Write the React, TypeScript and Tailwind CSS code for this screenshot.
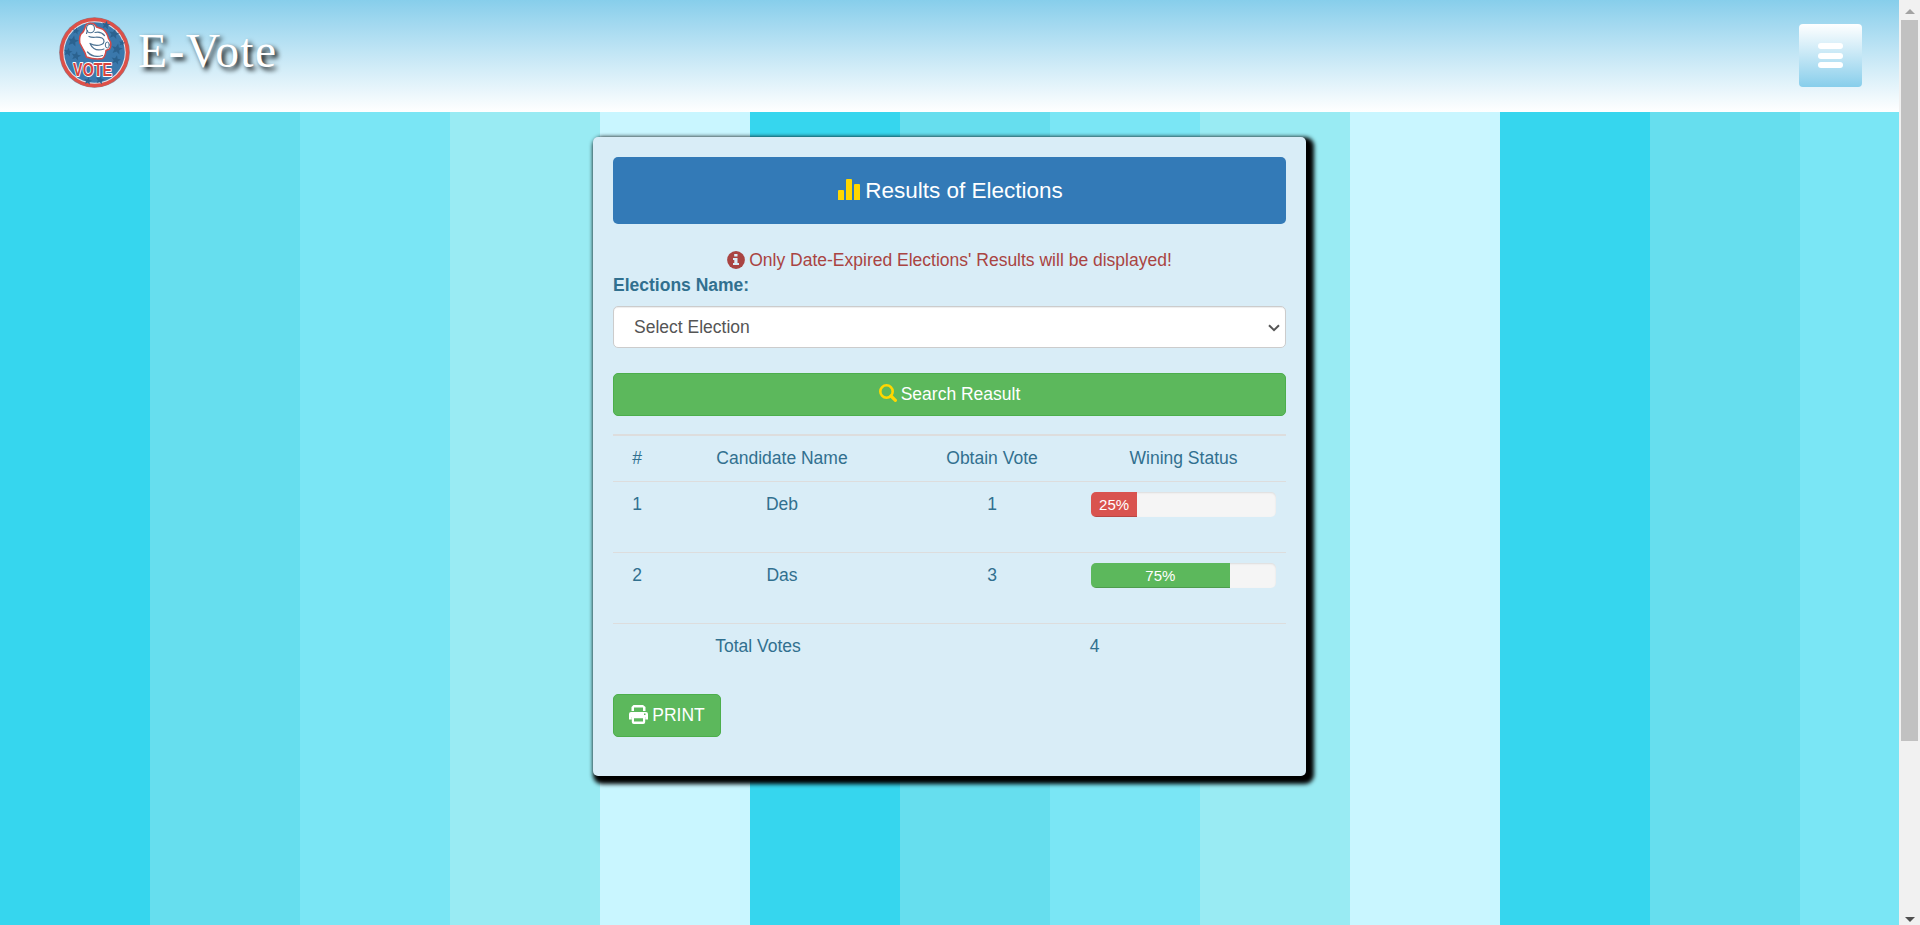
import React from "react";

const STAR = "M0-4 1.1-1.3 4-1.2 1.8.6 2.5 3.4 0 1.8-2.5 3.4-1.8.6-4-1.2-1.1-1.3z";

const stars: [number, number, number][] = [
  [14, 24, 1.4], [9, 35, 1.1], [17, 39, 1.2], [47, 8, 1.1], [55, 17, 1.3], [58, 32, 1.4],
  [17, 14, 0.9], [57, 43, 1.2], [63, 26, 0.8], [29, 64, 1.0], [41, 63, 1.1],
];

function VoteLogo() {
  return (
    <svg className="h-[71px] w-[71px] shrink-0" viewBox="0 0 71 71">
      <circle cx="35.5" cy="35.5" r="35.3" fill="#8a7d8c" />
      <circle cx="35.5" cy="35.5" r="34.8" fill="#dd5048" />
      <circle cx="35.5" cy="35.5" r="31.3" fill="#dfe6ee" />
      <circle cx="35.5" cy="35.5" r="30.3" fill="#3a78ac" />
      {stars.map(([x, y, s]) => (
        <path key={`${x}-${y}`} d={STAR} fill="#2b628f" transform={`translate(${x} ${y}) scale(${s}) rotate(12)`} />
      ))}
      <path
        d="M26.5 9Q28 6 32 6.300 36 6.500 37.500 10L43.500 12Q48 15 49.500 21.500L51.500 25Q52.500 29 50.500 32L47 33.500Q46.500 39 43.500 41.500 36 43 27.500 40 26 35 24.500 33L20.800 26Q20 20 22 17 25 15 26.500 9z"
        fill="#fff"
        stroke="#d34a48"
        strokeWidth="1.500"
        strokeLinejoin="round"
      />
      <g fill="none" stroke="#4d7393" strokeLinecap="round">
        <ellipse cx="31.500" cy="11.500" rx="4" ry="4.300" strokeWidth="1.100" />
        <path
          d="M28.500 13.500l-1 3M36 15.500c4-1 7 0 9.500 3M30 19.500c4 2 8-.5 13 1.500 3 1.500 2.500 5.500-.5 6.500-4 1.500-8 1-11.500-1M31.500 27.500c3 6 9 6 13.500 4.500M28.500 35c4 4.500 10 5 15 3.500"
          strokeWidth="1.200"
        />
        <ellipse cx="48.300" cy="28" rx="2" ry="3" strokeWidth="1" />
      </g>
      <text
        x="33.600"
        y="58.600"
        textAnchor="middle"
        textLength="39"
        lengthAdjust="spacingAndGlyphs"
        fontFamily="Liberation Sans, sans-serif"
        fontWeight="bold"
        fontSize="18"
        fill="#d8443f"
        stroke="#fff"
        strokeWidth="1.800"
        strokeLinejoin="round"
        paintOrder="stroke"
      >
        VOTE
      </text>
    </svg>
  );
}

function StatsIcon() {
  return (
    <svg className="h-[22px] w-[22px] -translate-y-px" viewBox="0 0 22 22" fill="#ffd700">
      <path d="M0 12q0-1 1-1h4q1 0 1 1v9H0zM8 1q0-1 1-1h4q1 0 1 1v20H8zM16 6q0-1 1-1h4q1 0 1 1v15h-6z" />
    </svg>
  );
}

function InfoIcon() {
  return (
    <svg className="h-[18px] w-[18px] -translate-y-px" viewBox="0 0 18 18">
      <circle cx="9" cy="9" r="8.900" fill="#a94442" />
      <path d="M7.200 3h3.300v2.500H7.200zM6 7h4.500v5H12v2H6v-2h1.300V9H6z" fill="#d9edf7" />
    </svg>
  );
}

function SearchIcon() {
  return (
    <svg className="h-[18px] w-[18px] -translate-y-[2px]" viewBox="0 0 18 18" fill="none" stroke="#ffd700">
      <circle cx="7.500" cy="7.500" r="6.200" strokeWidth="2.600" />
      <path d="M12 12l4.400 4.400" strokeWidth="3.200" strokeLinecap="round" />
    </svg>
  );
}

function PrintIcon() {
  return (
    <svg className="h-[19px] w-[19px] -translate-y-px" viewBox="0 0 19 19" fill="#fff" fillRule="evenodd">
      <path d="M2.500 6V2L4.500 0h9.500l2.500 2v4h-2.500V2.500h-9V6zM2 7h15q2 0 2 2v5.500h-3V12H3v2.500H0V9q0-2 2-2zM15 8.500v1.500h1.500V8.500zM2.800 12h13.400v5q0 2-2 2H4.800q-2 0-2-2zM5 13.200v3.200h9v-3.200z" />
    </svg>
  );
}

function Progress({ value, tone }: { value: number; tone: string }) {
  return (
    <div className="mb-[25px] h-[25px] w-full overflow-hidden rounded-[5px] bg-[#f5f5f5] shadow-[inset_0_1px_2px_rgba(0,0,0,0.1)]">
      <div
        className={`${tone} h-full text-center text-[15px] leading-[25px] text-white shadow-[inset_0_-1px_0_rgba(0,0,0,0.15)]`}
        style={{ width: `${value}%` }}
      >
        {value}%
      </div>
    </div>
  );
}

const rows = [
  { id: 1, name: "Deb", votes: 1, share: 25, tone: "bg-[#d9534f]" },
  { id: 2, name: "Das", votes: 3, share: 75, tone: "bg-[#5cb85c]" },
];

function Header() {
  return (
    <header className="flex h-[112px] items-start justify-between bg-linear-to-b from-[#87ceeb] to-white pl-[59px] pr-[37px]">
      <div className="flex pt-[17px]">
        <VoteLogo />
        <span className="ml-[8px] mt-[6px] font-['Liberation_Serif',serif] text-[47.5px] leading-[56px] tracking-[1.4px] text-white [text-shadow:3px_3px_5px_#000]">
          E-Vote
        </span>
      </div>
      <button
        aria-label="Menu"
        className="mt-[24px] flex h-[63px] w-[63px] flex-col items-center justify-center gap-[3.500px] rounded-[4px] bg-linear-to-b from-white to-[#87ceeb]"
      >
        <span className="h-[6px] w-[25px] rounded-[3px] bg-white" />
        <span className="h-[6px] w-[25px] rounded-[3px] bg-white" />
        <span className="h-[6px] w-[25px] rounded-[3px] bg-white" />
      </button>
    </header>
  );
}

function ResultsCard() {
  return (
    <section className="h-[639px] w-[713px] rounded-[5px] bg-[#d9edf7] p-[20px] text-[#31708f] shadow-[4px_4px_4px_4px_#000]">
      <h1 className="flex h-[67px] items-center justify-center gap-[5px] rounded-[5px] bg-[#337ab7] pl-[2px] text-[22.5px] text-white">
        <StatsIcon />
        Results of Elections
      </h1>
      <p className="mt-[24px] flex h-[25px] items-center justify-center gap-[4px] text-[#a94442]">
        <InfoIcon />
        Only Date-Expired Elections&apos; Results will be displayed!
      </p>
      <label className="block h-[33px] font-bold leading-[25px]">Elections Name:</label>
      <div className="flex h-[42px] items-center justify-between rounded-[5px] border border-[#ccc] bg-white pl-[20px] pr-[5px] text-[#555] shadow-[inset_0_1px_1px_rgba(0,0,0,0.075)]">
        Select Election
        <svg className="h-[8px] w-[12px] translate-y-px" viewBox="0 0 12 8" fill="none" stroke="#555" strokeWidth="2">
          <path d="M1 1.200l5 5 5-5" />
        </svg>
      </div>
      <button className="mt-[25px] flex h-[43px] w-full items-center justify-center gap-[4px] rounded-[5px] border border-[#4cae4c] bg-[#5cb85c] text-white">
        <SearchIcon />
        Search Reasult
      </button>
      <table className="mt-[18px] w-full table-fixed border-separate border-spacing-0 text-center leading-[25px]">
        <colgroup>
          <col className="w-[48px]" />
          <col className="w-[242px]" />
          <col className="w-[178px]" />
          <col className="w-[205px]" />
        </colgroup>
        <tbody>
          <tr>
            {["#", "Candidate Name", "Obtain Vote", "Wining Status"].map((title) => (
              <td key={title} className="border-t-2 border-[#ddd] p-[10px]">
                {title}
              </td>
            ))}
          </tr>
          {rows.map((row) => (
            <tr key={row.id} className="align-top">
              <td className="border-t border-[#ddd] p-[10px]">{row.id}</td>
              <td className="border-t border-[#ddd] p-[10px]">{row.name}</td>
              <td className="border-t border-[#ddd] p-[10px]">{row.votes}</td>
              <td className="border-t border-[#ddd] p-[10px]">
                <Progress value={row.share} tone={row.tone} />
              </td>
            </tr>
          ))}
          <tr>
            <td colSpan={2} className="border-t border-[#ddd] p-[10px]">
              Total Votes
            </td>
            <td colSpan={2} className="border-t border-[#ddd] p-[10px]">
              4
            </td>
          </tr>
        </tbody>
      </table>
      <button className="mt-[25px] flex h-[43px] w-[108px] items-center justify-center gap-[4px] rounded-[5px] border border-[#4cae4c] bg-[#5cb85c] text-white">
        <PrintIcon />
        PRINT
      </button>
    </section>
  );
}

function Scrollbar() {
  return (
    <div className="flex w-[21px] shrink-0 flex-col items-center bg-[#f1f1f1]">
      <div className="flex h-[20px] items-center">
        <svg className="h-[5px] w-[10px] translate-y-px" viewBox="0 0 10 5" fill="#a3a3a3">
          <path d="M5 0l5 5H0z" />
        </svg>
      </div>
      <div className="h-[721px] w-[17px] bg-[#c1c1c1]" />
      <div className="mt-auto flex h-[9px] items-start pt-px">
        <svg className="h-[5px] w-[10px]" viewBox="0 0 10 5" fill="#505050">
          <path d="M0 0h10L5 5z" />
        </svg>
      </div>
    </div>
  );
}

export default function App() {
  return (
    <div className="flex h-[925px] w-[1920px] overflow-hidden font-['Liberation_Sans',Arial,sans-serif] text-[17.5px] leading-[25px]">
      <div className="flex min-w-0 flex-1 flex-col">
        <Header />
        <main className="flex flex-1 items-start justify-center bg-[repeating-linear-gradient(90deg,#36d6ee_0px_150px,#66deee_150px_300px,#7ae6f5_300px_450px,#99ebf3_450px_600px,#c9f6ff_600px_750px)] pt-[25px]">
          <ResultsCard />
        </main>
      </div>
      <Scrollbar />
    </div>
  );
}
